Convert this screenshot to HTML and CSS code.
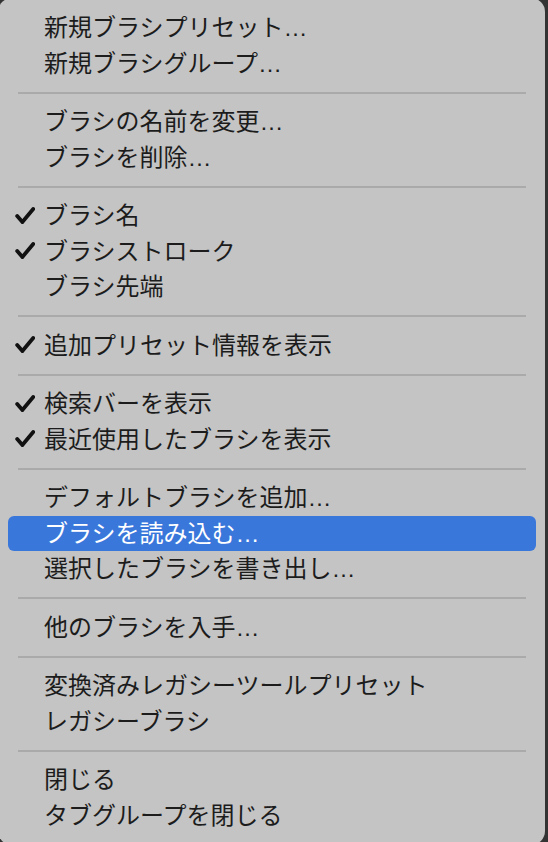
FILE: index.html
```html
<!DOCTYPE html>
<html lang="ja">
<head>
<meta charset="utf-8">
<link rel="stylesheet" href="styles.css">
</head>
<body>
<div class="menu">
  <div class="item"><span class="mark"></span><span class="label">新規ブラシプリセット…</span></div>
  <div class="item"><span class="mark"></span><span class="label">新規ブラシグループ…</span></div>
  <div class="sep"></div>
  <div class="item"><span class="mark"></span><span class="label">ブラシの名前を変更…</span></div>
  <div class="item"><span class="mark"></span><span class="label">ブラシを削除…</span></div>
  <div class="sep"></div>
  <div class="item"><span class="mark"><svg class="check" viewBox="0 0 20 17" width="20" height="17"><path d="M2.2 9 L7.4 15 L18.2 2"/></svg></span><span class="label">ブラシ名</span></div>
  <div class="item"><span class="mark"><svg class="check" viewBox="0 0 20 17" width="20" height="17"><path d="M2.2 9 L7.4 15 L18.2 2"/></svg></span><span class="label">ブラシストローク</span></div>
  <div class="item"><span class="mark"></span><span class="label">ブラシ先端</span></div>
  <div class="sep"></div>
  <div class="item"><span class="mark"><svg class="check" viewBox="0 0 20 17" width="20" height="17"><path d="M2.2 9 L7.4 15 L18.2 2"/></svg></span><span class="label">追加プリセット情報を表示</span></div>
  <div class="sep"></div>
  <div class="item"><span class="mark"><svg class="check" viewBox="0 0 20 17" width="20" height="17"><path d="M2.2 9 L7.4 15 L18.2 2"/></svg></span><span class="label">検索バーを表示</span></div>
  <div class="item"><span class="mark"><svg class="check" viewBox="0 0 20 17" width="20" height="17"><path d="M2.2 9 L7.4 15 L18.2 2"/></svg></span><span class="label">最近使用したブラシを表示</span></div>
  <div class="sep"></div>
  <div class="item"><span class="mark"></span><span class="label">デフォルトブラシを追加…</span></div>
  <div class="item active"><span class="mark"></span><span class="label">ブラシを読み込む…</span></div>
  <div class="item"><span class="mark"></span><span class="label">選択したブラシを書き出し…</span></div>
  <div class="sep"></div>
  <div class="item"><span class="mark"></span><span class="label">他のブラシを入手…</span></div>
  <div class="sep"></div>
  <div class="item"><span class="mark"></span><span class="label">変換済みレガシーツールプリセット</span></div>
  <div class="item"><span class="mark"></span><span class="label">レガシーブラシ</span></div>
  <div class="sep"></div>
  <div class="item"><span class="mark"></span><span class="label">閉じる</span></div>
  <div class="item"><span class="mark"></span><span class="label">タブグループを閉じる</span></div>
</div>
</body>
</html>
```

FILE: styles.css
```css
html, body {
  margin: 0;
  padding: 0;
  background: #333333;
  overflow: hidden;
  height: 842px;
}

.menu {
  margin: -2px 0 0 -2px;
  width: 547px;
  height: 847px;
  box-sizing: border-box;
  padding-top: 12px;
  background: #c4c4c4;
  border-radius: 14px;
  display: flex;
  flex-direction: column;
  font-family: "Liberation Sans", "Noto Sans CJK JP", sans-serif;
  font-size: 24px;
  color: #1c1c1c;
}

.item {
  height: 35.5px;
  margin: 0 9px 0 10px;
  display: flex;
  align-items: center;
  border-radius: 6px;
  flex-shrink: 0;
}

.item.active {
  background: #3a77db;
  color: #ffffff;
}

.mark {
  width: 36px;
  height: 100%;
  flex-shrink: 0;
  display: flex;
  align-items: center;
}

.check {
  display: block;
  margin: -1px 0 0 7px;
  fill: none;
  stroke: #111111;
  stroke-width: 3.8;
  stroke-linecap: round;
  stroke-linejoin: miter;
}

.label {
  white-space: nowrap;
  line-height: 35.5px;
}

.sep {
  height: 23px;
  margin: 0 19px 0 20px;
  display: flex;
  align-items: center;
  flex-shrink: 0;
}

.sep::before {
  content: "";
  display: block;
  width: 100%;
  height: 2px;
  background: #aaaaaa;
}
```
